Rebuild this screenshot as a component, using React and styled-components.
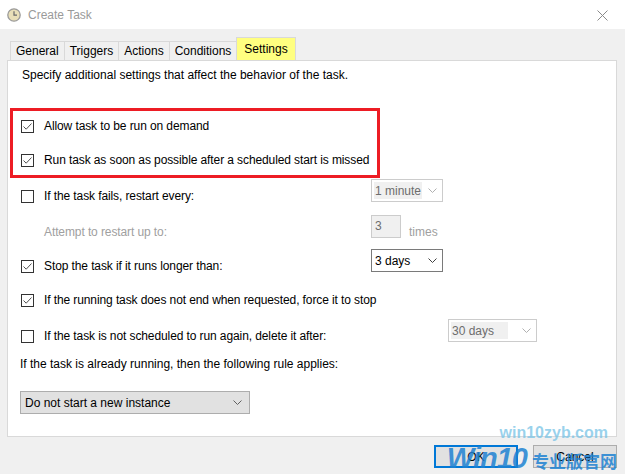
import React from 'react'
import styled, { createGlobalStyle } from 'styled-components'

const GlobalStyle = createGlobalStyle`
    html, body {
        margin: 0;
        padding: 0;
        background: #f0f0f0;
    }
    body {
        font-family: "Liberation Sans", Arial, sans-serif;
        font-size: 12px;
        color: #000;
    }
`

const CheckMark = () => (
    <svg width="11" height="11" viewBox="0 0 11 11">
        <path d="M1.5 5.5 L4.2 8.2 L9.5 2.5" fill="none" stroke="#505050" strokeWidth="1" />
    </svg>
)

const Chevron = ({ color }) => (
    <svg width="9" height="5" viewBox="0 0 9 5">
        <path d="M0.5 0.5 L4.5 4.5 L8.5 0.5" fill="none" stroke={color} strokeWidth="1" />
    </svg>
)

const ClockIcon = () => (
    <svg width="14" height="14" viewBox="0 0 14 14">
        <circle cx="7" cy="7" r="6.2" fill="#e9dfb8" stroke="#9a9a9a" strokeWidth="1.3" />
        <path d="M7 3.2 V7.2 H10" fill="none" stroke="#6a6a6a" strokeWidth="1.2" />
    </svg>
)

export default function App() {
    return (
        <>
            <GlobalStyle />
            <Window>
                <TitleBar>
                    <ClockIcon />
                    <Title>Create Task</Title>
                    <Close>
                        <svg width="11" height="11" viewBox="0 0 11 11">
                            <path d="M0.5 0.5 L10.5 10.5 M10.5 0.5 L0.5 10.5" stroke="#8a8a8a" strokeWidth="1" />
                        </svg>
                    </Close>
                </TitleBar>
                <Body>
                    <Tabs>
                        <Tab>General</Tab>
                        <Tab>Triggers</Tab>
                        <Tab>Actions</Tab>
                        <Tab>Conditions</Tab>
                        <Tab $active>Settings</Tab>
                    </Tabs>
                    <Panel>
                        <Description>Specify additional settings that affect the behavior of the task.</Description>
                        <Highlight>
                            <Row $h={24}>
                                <Check $on><CheckMark /></Check>
                                <Label>Allow task to be run on demand</Label>
                            </Row>
                            <Row $h={24} $mt={10}>
                                <Check $on><CheckMark /></Check>
                                <Label>Run task as soon as possible after a scheduled start is missed</Label>
                            </Row>
                        </Highlight>
                        <Row $h={34} $mt={1} $pl={13}>
                            <LabelCol $w={350}>
                                <Check />
                                <Label>If the task fails, restart every:</Label>
                            </LabelCol>
                            <Select $disabled $w={72}>
                                <SelectText $disabled>1 minute</SelectText>
                                <Chevron color="#b0b0b0" />
                            </Select>
                        </Row>
                        <Row $h={34} $mt={2} $pl={36}>
                            <LabelCol $w={327}>
                                <Label $muted>Attempt to restart up to:</Label>
                            </LabelCol>
                            <NumberBox>3</NumberBox>
                            <Unit>times</Unit>
                        </Row>
                        <Row $h={34} $pl={13}>
                            <LabelCol $w={350}>
                                <Check $on><CheckMark /></Check>
                                <Label>Stop the task if it runs longer than:</Label>
                            </LabelCol>
                            <Select $w={72}>
                                <SelectText>3 days</SelectText>
                                <Chevron color="#404040" />
                            </Select>
                        </Row>
                        <Row $h={34} $pl={13}>
                            <Check $on><CheckMark /></Check>
                            <Label>If the running task does not end when requested, force it to stop</Label>
                        </Row>
                        <Row $h={34} $mt={2} $pl={13}>
                            <LabelCol $w={427}>
                                <Check />
                                <Label>If the task is not scheduled to run again, delete it after:</Label>
                            </LabelCol>
                            <Select $disabled $w={89}>
                                <SelectText $disabled $wide>30 days</SelectText>
                                <Chevron color="#b0b0b0" />
                            </Select>
                        </Row>
                        <Note>If the task is already running, then the following rule applies:</Note>
                        <RuleSelect>
                            <span>Do not start a new instance</span>
                            <Chevron color="#606060" />
                        </RuleSelect>
                    </Panel>
                    <Footer>
                        <Button $primary>OK</Button>
                        <Button>Cancel</Button>
                    </Footer>
                </Body>
                <Watermark>
                    <Site>win10zyb.com</Site>
                    <Brand><em>Win10</em><span>专业版官网</span></Brand>
                </Watermark>
            </Window>
        </>
    )
}

const Window = styled.div`
    position: relative;
    width: 625px;
    height: 474px;
    overflow: hidden;
    background: #f0f0f0;
`

const TitleBar = styled.div`
    display: flex;
    align-items: center;
    height: 29px;
    padding-left: 7px;
    background: #fff;
`

const Title = styled.span`
    margin-left: 7px;
    color: #9a9a9a;
    font-size: 12px;
`

const Close = styled.div`
    margin-left: auto;
    width: 46px;
    display: flex;
    justify-content: center;
    padding-top: 1px;
`

const Body = styled.div`
    padding: 8px 8px 0 7px;
`

const Tabs = styled.div`
    display: flex;
    align-items: flex-end;
    height: 23px;
    padding-left: 3px;
`

const Tab = styled.div`
    height: ${p => (p.$active ? 23 : 19)}px;
    box-sizing: border-box;
    padding: 0 ${p => (p.$active ? 7 : 5)}px;
    display: flex;
    align-items: center;
    background: ${p => (p.$active ? '#ffff80' : '#f0f0f0')};
    border: 1px solid #d9d9d9;
    border-bottom: none;
    border-right-width: ${p => (p.$active ? 1 : 0)}px;
    font-size: 12px;
    color: #000;
`

const Panel = styled.div`
    height: 377px;
    box-sizing: border-box;
    background: #fff;
    border: 1px solid #d9d9d9;
    display: flex;
    flex-direction: column;
`

const Description = styled.div`
    margin: 7px 0 0 14px;
    line-height: 14px;
`

const Highlight = styled.div`
    margin: 26px 0 0 2px;
    width: 370px;
    height: 70px;
    box-sizing: border-box;
    border: 3px solid #ed1c24;
    padding: 3px 0 0 8px;
`

const Row = styled.div`
    display: flex;
    align-items: center;
    height: ${p => p.$h}px;
    margin-top: ${p => p.$mt || 0}px;
    padding-left: ${p => p.$pl || 0}px;
`

const LabelCol = styled.div`
    display: flex;
    align-items: center;
    width: ${p => p.$w}px;
    flex-shrink: 0;
`

const Check = styled.div`
    width: 13px;
    height: 13px;
    box-sizing: border-box;
    border: 1px solid #333;
    background: #fff;
    display: flex;
    align-items: center;
    justify-content: center;
    margin-right: 10px;
    flex-shrink: 0;
`

const Label = styled.span`
    color: ${p => (p.$muted ? '#a0a0a0' : '#000')};
    white-space: nowrap;
    letter-spacing: -0.1px;
`

const Select = styled.div`
    align-self: flex-start;
    width: ${p => p.$w}px;
    height: 23px;
    box-sizing: border-box;
    border: 1px solid ${p => (p.$disabled ? '#cccccc' : '#7a7a7a')};
    background: #fff;
    display: flex;
    align-items: center;
    justify-content: space-between;
    padding: 0 5px 0 2px;
`

const SelectText = styled.span`
    display: flex;
    align-items: center;
    height: 17px;
    padding: 0 ${p => (p.$wide ? 14 : 1)}px 0 1px;
    background: ${p => (p.$disabled ? '#f0f0f0' : 'transparent')};
    color: ${p => (p.$disabled ? '#6d6d6d' : '#000')};
`

const NumberBox = styled.div`
    align-self: flex-start;
    width: 30px;
    height: 23px;
    box-sizing: border-box;
    border: 1px solid #cccccc;
    background: #f0f0f0;
    color: #6d6d6d;
    padding: 3px 0 0 3px;
`

const Unit = styled.span`
    margin-left: 8px;
    color: #a0a0a0;
`

const Note = styled.div`
    margin: 4px 0 0 12px;
    line-height: 14px;
`

const RuleSelect = styled.div`
    margin: 20px 0 0 12px;
    width: 230px;
    height: 23px;
    box-sizing: border-box;
    background: #e1e1e1;
    border: 1px solid #adadad;
    display: flex;
    align-items: center;
    justify-content: space-between;
    padding: 0 7px 0 4px;
`

const Footer = styled.div`
    display: flex;
    justify-content: flex-end;
    gap: 15px;
    margin-top: 8px;
`

const Button = styled.div`
    width: 84px;
    height: 23px;
    box-sizing: border-box;
    background: #e1e1e1;
    border: ${p => (p.$primary ? '2px solid #0078d7' : '1px solid #adadad')};
    display: flex;
    align-items: center;
    justify-content: center;
`

const Watermark = styled.div`
    position: absolute;
    right: 8px;
    bottom: -2px;
    display: flex;
    flex-direction: column;
    align-items: flex-end;
    pointer-events: none;
`

const Site = styled.div`
    font-family: "Liberation Sans", Arial, sans-serif;
    font-weight: bold;
    font-size: 16px;
    line-height: 20px;
    color: rgba(120, 195, 230, 0.75);
    margin-right: 9px;
`

const Brand = styled.div`
    display: flex;
    align-items: baseline;
    gap: 5px;
    line-height: 30px;
    em {
        font-family: "Liberation Sans", Arial, sans-serif;
        font-weight: bold;
        font-style: italic;
        font-size: 29px;
        color: rgba(30, 130, 210, 0.85);
        letter-spacing: -1px;
    }
    span {
        font-family: "Noto Sans CJK SC", sans-serif;
        font-weight: bold;
        font-size: 17px;
        color: rgba(30, 130, 210, 0.85);
    }
`
